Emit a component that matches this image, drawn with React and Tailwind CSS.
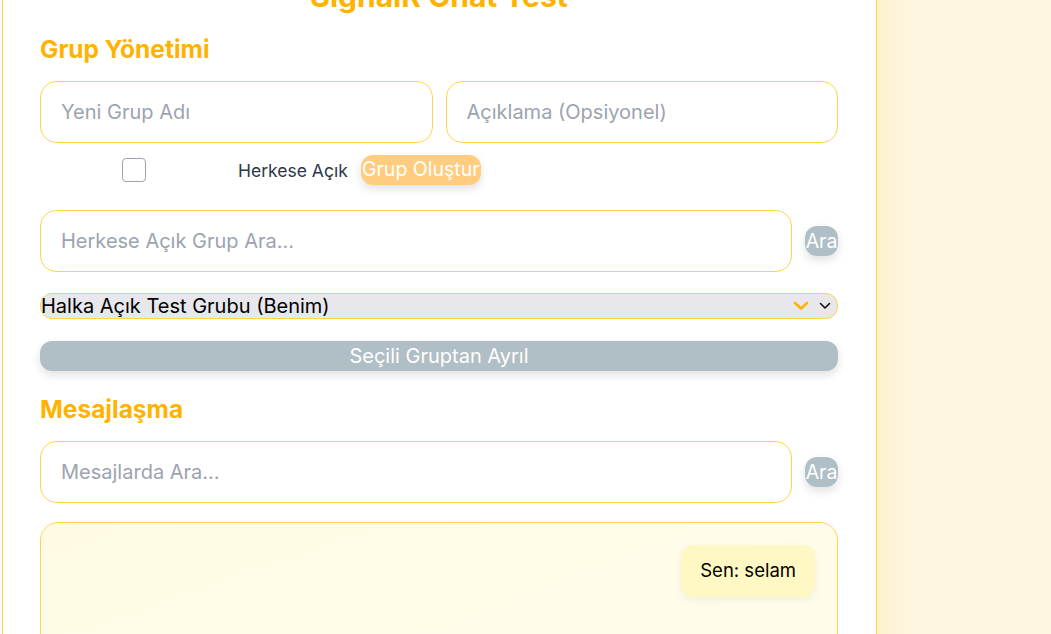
import React from "react";

const inputCls =
    "w-full h-[62px] rounded-2xl border border-[#ffd54f] bg-white px-[20px] text-[20px] text-gray-800 placeholder:text-[#9ca3af] outline-none";

function AraButton() {
    return (
        <button className="w-[33px] h-[30px] shrink-0 self-center overflow-hidden whitespace-nowrap rounded-xl bg-[#b0bec5] text-white text-[19.5px] leading-[30px] flex justify-center shadow-[0_4px_10px_rgba(0,0,0,0.12)]">
            Ara
        </button>
    );
}

export default function App() {
    return (
        <div className="h-[634px] overflow-hidden flex bg-white font-[family-name:Inter,'Noto_Sans',sans-serif]">
            <div className="w-[875px] ml-[2px] shrink-0 bg-white border-x border-[#ffd23f] pl-[37px] pr-[38px]">
                <h1 className="-mt-[21px] text-center text-[30px] leading-[34px] font-bold text-[#ffb300]">
                    SignalR Chat Test
                </h1>

                {/* Grup yönetimi */}
                <h2 className="mt-[22px] text-[24.5px] leading-[28px] font-bold text-[#ffb300]">Grup Yönetimi</h2>
                <div className="mt-[18px] flex gap-[13px]">
                    <input className={inputCls} placeholder="Yeni Grup Adı" />
                    <input className={inputCls} placeholder="Açıklama (Opsiyonel)" />
                </div>
                <div className="mt-[12px] h-[30px] flex items-center">
                    <span className="ml-[82px] w-[24px] h-[24px] rounded-[4px] border-[1.5px] border-[#9ca3af] bg-white" />
                    <span className="ml-[92px] mt-[2px] text-[17.5px] text-[#2d3748]">Herkese Açık</span>
                    <button className="ml-[13px] h-[30px] w-[120px] overflow-hidden whitespace-nowrap rounded-xl bg-[#ffcc80] text-white text-[19.5px] flex justify-center items-center shadow-[0_4px_10px_rgba(0,0,0,0.12)]">
                        Grup Oluştur
                    </button>
                </div>
                <div className="mt-[25px] flex gap-[13px]">
                    <input className={inputCls} placeholder="Herkese Açık Grup Ara..." />
                    <AraButton />
                </div>
                <div className="mt-[21px] h-[26px] flex items-center rounded-[12px] border border-[#ffd54f] bg-[#e8e8ec] text-[20px] text-black">
                    <span className="flex-1 leading-[24px]">Halka Açık Test Grubu (Benim)</span>
                    <svg width="16" height="10" viewBox="0 0 16 10" className="mr-[10px]">
                        <path d="M2 2 L8 7.5 L14 2" fill="none" stroke="#ffb300" strokeWidth="2.6" strokeLinecap="round" strokeLinejoin="round" />
                    </svg>
                    <svg width="12" height="8" viewBox="0 0 12 8" className="mr-[6px]">
                        <path d="M1.5 1.5 L6 6 L10.5 1.5" fill="none" stroke="#111" strokeWidth="1.6" strokeLinecap="round" strokeLinejoin="round" />
                    </svg>
                </div>
                <button className="mt-[22px] w-full h-[30px] rounded-xl bg-[#b0bec5] text-white text-[20px] shadow-[0_4px_10px_rgba(0,0,0,0.12)]">
                    Seçili Gruptan Ayrıl
                </button>

                {/* Mesajlaşma */}
                <h2 className="mt-[24px] text-[24.5px] leading-[28px] font-bold text-[#ffb300]">Mesajlaşma</h2>
                <div className="mt-[18px] flex gap-[13px]">
                    <input className={inputCls} placeholder="Mesajlarda Ara..." />
                    <AraButton />
                </div>
                <div className="mt-[19px] h-[300px] rounded-[18px] border border-[#ffd54f] bg-gradient-to-br from-[#fffbe3] to-[#fffdf0] p-[22px] flex flex-col items-end">
                    <div className="h-[52px] px-[19px] flex items-center rounded-xl bg-[#fff8c4] text-[18.5px] text-black shadow-[0_3px_8px_rgba(0,0,0,0.06)]">
                        Sen: selam
                    </div>
                </div>
            </div>
            <div className="flex-1 bg-[linear-gradient(to_right,#fff1cc,#fef5de_25px,#fdf5df)]" />
        </div>
    );
}
